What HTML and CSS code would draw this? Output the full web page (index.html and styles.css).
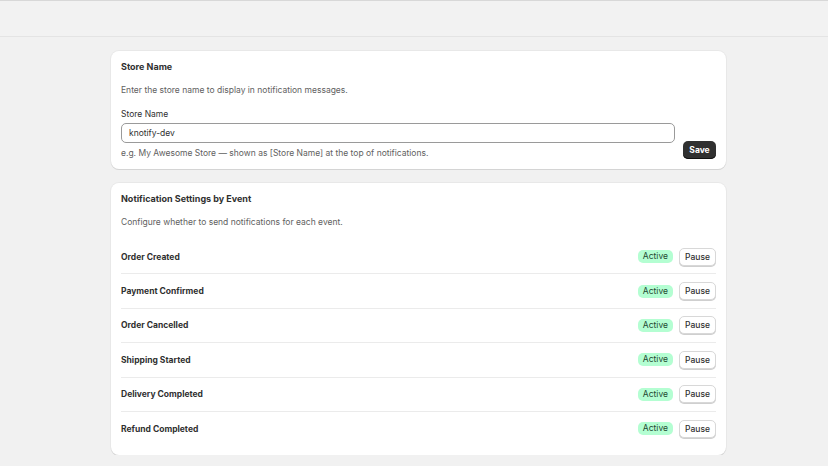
FILE: index.html
```html
<!DOCTYPE html>
<html lang="en">
<head>
    <meta charset="UTF-8">
    <meta name="viewport" content="width=device-width, initial-scale=1.0">
    <title>Notification Settings</title>
    <link rel="stylesheet" href="styles.css">
</head>
<body>

<div class="topbar"></div>

<main class="page">
    <!-- store name -->
    <section class="card">
        <h2 class="card-title">Store Name</h2>
        <p class="card-desc">Enter the store name to display in notification messages.</p>
        <div class="field-row">
            <div class="field">
                <label for="storeName" class="field-label">Store Name</label>
                <input type="text" id="storeName" class="text-input" value="knotify-dev">
                <p class="help">e.g. My Awesome Store — shown as [Store Name] at the top of notifications.</p>
            </div>
            <button type="button" class="btn-primary">Save</button>
        </div>
    </section>

    <!-- events -->
    <section class="card">
        <h2 class="card-title">Notification Settings by Event</h2>
        <p class="card-desc">Configure whether to send notifications for each event.</p>
        <div class="event-list">
            <div class="event-row">
                <span class="event-name">Order Created</span>
                <span class="badge">Active</span>
                <button type="button" class="btn">Pause</button>
            </div>
            <div class="event-row">
                <span class="event-name">Payment Confirmed</span>
                <span class="badge">Active</span>
                <button type="button" class="btn">Pause</button>
            </div>
            <div class="event-row">
                <span class="event-name">Order Cancelled</span>
                <span class="badge">Active</span>
                <button type="button" class="btn">Pause</button>
            </div>
            <div class="event-row">
                <span class="event-name">Shipping Started</span>
                <span class="badge">Active</span>
                <button type="button" class="btn">Pause</button>
            </div>
            <div class="event-row">
                <span class="event-name">Delivery Completed</span>
                <span class="badge">Active</span>
                <button type="button" class="btn">Pause</button>
            </div>
            <div class="event-row">
                <span class="event-name">Refund Completed</span>
                <span class="badge">Active</span>
                <button type="button" class="btn">Pause</button>
            </div>
        </div>
    </section>
</main>

</body>
</html>
```

FILE: styles.css
```css
body {
    margin: 0;
    background: #f1f1f1;
    font-family: Inter, "Noto Sans", sans-serif;
    font-size: 8.5px;
    line-height: 12px;
    color: #303030;
}
.topbar {
    height: 35px;
    border-top: 1px solid #d8d8d8;
    border-bottom: 1px solid #e4e4e4;
    background: #f2f2f2;
}
.page {
    width: 615px;
    margin: 14px 0 0 111px;
    display: flex;
    flex-direction: column;
    gap: 14px;
}
.card {
    background: #fff;
    border-radius: 8px;
    padding: 10px;
    box-shadow: 0 1px 0 #d4d4d4, 0 0 0 1px #e8e8e8;
}
.card-title {
    margin: 0;
    font-size: 9px;
    font-weight: 650;
    line-height: 12px;
}
.card-desc {
    margin: 11px 0 0;
    color: #616161;
}
.field-row {
    display: flex;
    align-items: flex-end;
    gap: 8px;
    margin-top: 12px;
}
.field {
    flex: 1;
}
.field-label {
    display: block;
}
.text-input {
    display: block;
    box-sizing: border-box;
    width: 100%;
    height: 20px;
    margin-top: 3px;
    padding: 0 7px;
    border: 1px solid #9a9a9a;
    border-radius: 5px;
    font: inherit;
    color: #303030;
}
.help {
    margin: 4px 0 0;
    color: #616161;
}
.btn-primary {
    width: 33px;
    height: 18px;
    padding: 0;
    border: none;
    border-radius: 5px;
    background: #303030;
    color: #fff;
    font: inherit;
    font-weight: 650;
    box-shadow: inset 0 -1px 0 #111;
}
.event-list {
    margin-top: 12px;
}
.event-row {
    display: flex;
    align-items: center;
    gap: 6px;
    padding: 7.7px 0;
    border-bottom: 1px solid #ebebeb;
}
.event-row:last-child {
    border-bottom: none;
}
.event-name {
    flex: 1;
    font-weight: 650;
}
.badge {
    padding: 0 5px;
    height: 13px;
    line-height: 13px;
    border-radius: 5px;
    background: #b4fed2;
    color: #1f4a33;
}
.btn {
    width: 37px;
    height: 18px;
    padding: 0;
    border: 1px solid #d8d8d8;
    border-radius: 5px;
    background: #fff;
    color: #303030;
    font: inherit;
    font-weight: 500;
    box-shadow: 0 1px 0 #cfcfcf;
}
```
